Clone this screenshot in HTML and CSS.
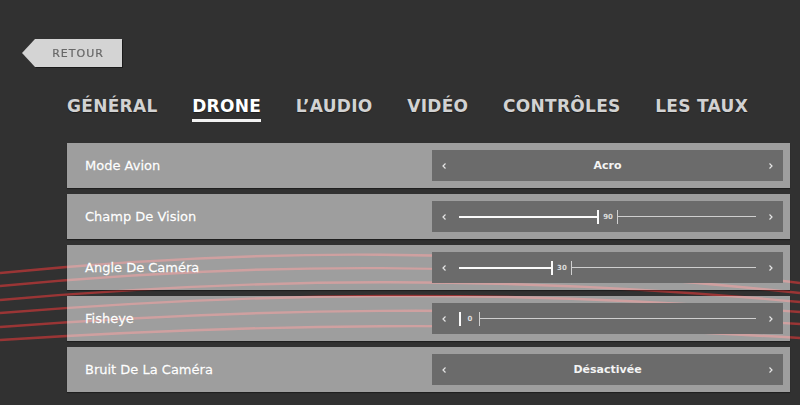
FILE: index.html
```html
<!DOCTYPE html>
<html lang="fr">
<head>
    <meta charset="UTF-8">
    <meta name="viewport" content="width=device-width, initial-scale=1.0">
    <title>Paramètres</title>
    <link rel="stylesheet" href="styles.css">
</head>
<body>
    <div class="screen">

        <!-- traînées rouges en fond -->
        <svg class="streaks" viewBox="0 0 800 405" preserveAspectRatio="none">
            <path d="M0 273 C 250 248, 500 246, 800 283" />
            <path d="M0 286 C 250 262, 500 260, 800 293" />
            <path d="M0 300 C 250 278, 500 274, 800 302" />
            <path d="M0 313 C 250 293, 500 288, 800 312" />
            <path d="M0 327 C 250 308, 500 304, 800 324" />
            <path d="M0 340 C 250 324, 500 320, 800 338" />
        </svg>

        <div class="top">
            <a class="back" href="#">RETOUR</a>
        </div>

        <nav class="tabs">
            <a href="#" class="tab">GÉNÉRAL</a>
            <a href="#" class="tab active">DRONE</a>
            <a href="#" class="tab">L’AUDIO</a>
            <a href="#" class="tab">VIDÉO</a>
            <a href="#" class="tab">CONTRÔLES</a>
            <a href="#" class="tab">LES TAUX</a>
        </nav>

        <div class="settings">
            <div class="setting">
                <span class="setting-name">Mode Avion</span>
                <div class="picker">
                    <svg class="chevron" viewBox="0 0 4 6"><path d="M3.5 0.5 L1 3 L3.5 5.5" /></svg>
                    <span class="picker-value">Acro</span>
                    <svg class="chevron" viewBox="0 0 4 6"><path d="M0.5 0.5 L3 3 L0.5 5.5" /></svg>
                </div>
            </div>

            <div class="setting">
                <span class="setting-name">Champ De Vision</span>
                <div class="picker">
                    <svg class="chevron" viewBox="0 0 4 6"><path d="M3.5 0.5 L1 3 L3.5 5.5" /></svg>
                    <div class="slider" style="--v: 0.5">
                        <span class="slider-fill"></span>
                        <span class="slider-thumb"><span class="tick"></span><span class="slider-num">90</span><span class="tick light"></span></span>
                        <span class="slider-rest"></span>
                    </div>
                    <svg class="chevron" viewBox="0 0 4 6"><path d="M0.5 0.5 L3 3 L0.5 5.5" /></svg>
                </div>
            </div>

            <div class="setting">
                <span class="setting-name">Angle De Caméra</span>
                <div class="picker">
                    <svg class="chevron" viewBox="0 0 4 6"><path d="M3.5 0.5 L1 3 L3.5 5.5" /></svg>
                    <div class="slider" style="--v: 0.333">
                        <span class="slider-fill"></span>
                        <span class="slider-thumb"><span class="tick"></span><span class="slider-num">30</span><span class="tick light"></span></span>
                        <span class="slider-rest"></span>
                    </div>
                    <svg class="chevron" viewBox="0 0 4 6"><path d="M0.5 0.5 L3 3 L0.5 5.5" /></svg>
                </div>
            </div>

            <div class="setting">
                <span class="setting-name">Fisheye</span>
                <div class="picker">
                    <svg class="chevron" viewBox="0 0 4 6"><path d="M3.5 0.5 L1 3 L3.5 5.5" /></svg>
                    <div class="slider" style="--v: 0">
                        <span class="slider-fill"></span>
                        <span class="slider-thumb"><span class="tick"></span><span class="slider-num">0</span><span class="tick light"></span></span>
                        <span class="slider-rest"></span>
                    </div>
                    <svg class="chevron" viewBox="0 0 4 6"><path d="M0.5 0.5 L3 3 L0.5 5.5" /></svg>
                </div>
            </div>

            <div class="setting">
                <span class="setting-name">Bruit De La Caméra</span>
                <div class="picker">
                    <svg class="chevron" viewBox="0 0 4 6"><path d="M3.5 0.5 L1 3 L3.5 5.5" /></svg>
                    <span class="picker-value">Désactivée</span>
                    <svg class="chevron" viewBox="0 0 4 6"><path d="M0.5 0.5 L3 3 L0.5 5.5" /></svg>
                </div>
            </div>
        </div>
    </div>
</body>
</html>
```

FILE: styles.css
```css
html,
body {
    margin: 0;
    height: 100%;
}

body {
    font-family: 'DejaVu Sans', Verdana, sans-serif;
    background-color: #313131;
    overflow: hidden;
}

.screen {
    position: relative;
    height: 100%;
    padding: 39px 10px 0 22px;
    box-sizing: border-box;
}

.streaks {
    position: absolute;
    left: 0;
    top: 0;
    width: 100%;
    height: 100%;
}

    .streaks path {
        fill: none;
        stroke: rgba(195, 55, 55, 0.72);
        stroke-width: 2.4;
    }

/* bouton retour en forme de flèche */
.top {
    position: relative;
    display: flex;
    filter: drop-shadow(1px 1px 0 rgba(0, 0, 0, 0.45));
}

.back {
    display: flex;
    align-items: center;
    justify-content: center;
    width: 100px;
    height: 28px;
    padding-left: 12px;
    box-sizing: border-box;
    background: #d4d4d4;
    clip-path: polygon(13px 0, 100% 0, 100% 100%, 13px 100%, 0 50%);
    color: #686868;
    font-size: 11px;
    letter-spacing: 1px;
    text-decoration: none;
    -webkit-text-stroke: 0.2px #686868;
}

/* onglets */
.tabs {
    position: relative;
    display: flex;
    gap: 34.6px;
    margin: 29px 0 0 45px;
}

.tab {
    color: #d2d2d2;
    font-size: 17px;
    font-weight: bold;
    line-height: 20px;
    letter-spacing: 0.3px;
    padding-bottom: 3px;
    text-decoration: none;
    border-bottom: 3px solid transparent;
    text-shadow: 0 1px 1px rgba(0, 0, 0, 0.4);
}

    .tab.active {
        color: #fff;
        border-bottom-color: #f2f2f2;
    }

/* liste des réglages */
.settings {
    position: relative;
    display: flex;
    flex-direction: column;
    gap: 6px;
    margin: 21px 0 0 45px;
}

.setting {
    display: flex;
    align-items: center;
    justify-content: space-between;
    height: 45px;
    padding: 0 7px 0 18px;
    background: rgba(255, 255, 255, 0.53);
    box-shadow: 0 1px 1px rgba(0, 0, 0, 0.35);
}

.setting-name {
    color: #fff;
    font-size: 13px;
    -webkit-text-stroke: 0.3px #fff;
    text-shadow: 0 0 1px rgba(0, 0, 0, 0.25);
}

.picker {
    display: flex;
    align-items: center;
    gap: 13px;
    width: 351px;
    height: 31px;
    padding: 0 10px;
    box-sizing: border-box;
    background: #6b6b6b;
}

.chevron {
    flex: none;
    width: 4px;
    height: 6px;
}

    .chevron path {
        fill: none;
        stroke: #e6e6e6;
        stroke-width: 1.2;
    }

.picker-value {
    flex: 1;
    text-align: center;
    color: #f4f4f4;
    font-size: 11px;
    font-weight: bold;
}

/* curseur avec valeur entre deux repères */
.slider {
    flex: 1;
    display: flex;
    align-items: center;
    height: 16px;
}

.slider-fill {
    flex: none;
    width: calc((100% - 21px) * var(--v));
    height: 2px;
    background: #fafafa;
}

.slider-thumb {
    flex: none;
    display: flex;
    align-items: center;
    justify-content: space-between;
    width: 21px;
    height: 14px;
}

.tick {
    width: 2px;
    height: 14px;
    background: #fafafa;
}

    .tick.light {
        width: 1px;
        background: #d0d0d0;
    }

.slider-num {
    color: #dcdcdc;
    font-size: 7px;
    font-weight: bold;
}

.slider-rest {
    flex: 1;
    height: 1.5px;
    background: #cfcfcf;
}
```
